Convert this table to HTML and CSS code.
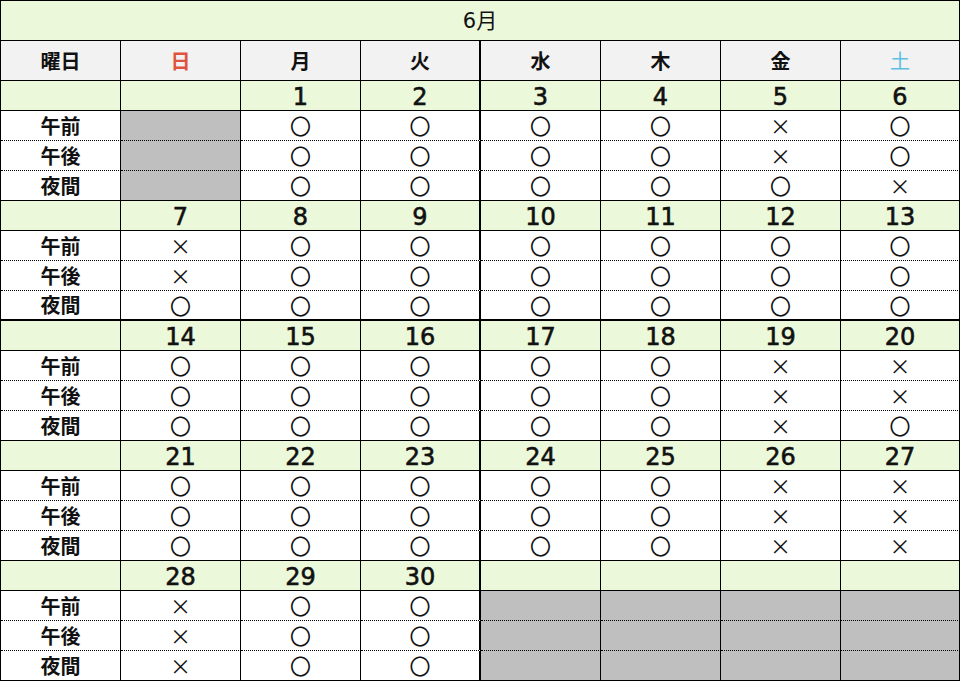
FILE: index.html
```html
<!DOCTYPE html>
<html lang="ja">
<head>
<meta charset="utf-8">
<title>6月</title>
<link rel="stylesheet" href="styles.css">
</head>
<body>
<table class="cal">
  <colgroup>
    <col class="c-label"><col class="c-day"><col class="c-day"><col class="c-day"><col class="c-day"><col class="c-day"><col class="c-day"><col class="c-last">
  </colgroup>
  <tr class="title"><td colspan="8"><span class="num">6</span>月</td></tr>
  <tr class="head">
    <td>曜日</td><td class="sun">日</td><td>月</td><td class="tue">火</td><td>水</td><td>木</td><td>金</td><td class="sat">土</td>
  </tr>

  <tr class="date"><td></td><td></td><td>1</td><td class="tue">2</td><td>3</td><td>4</td><td>5</td><td>6</td></tr>
  <tr class="slot dot"><td class="lbl">午前</td><td class="na"></td><td>〇</td><td class="tue">〇</td><td>〇</td><td>〇</td><td>×</td><td>〇</td></tr>
  <tr class="slot dot"><td class="lbl">午後</td><td class="na"></td><td>〇</td><td class="tue">〇</td><td>〇</td><td>〇</td><td>×</td><td>〇</td></tr>
  <tr class="slot"><td class="lbl">夜間</td><td class="na"></td><td>〇</td><td class="tue">〇</td><td>〇</td><td>〇</td><td>〇</td><td>×</td></tr>

  <tr class="date"><td></td><td>7</td><td>8</td><td class="tue">9</td><td>10</td><td>11</td><td>12</td><td>13</td></tr>
  <tr class="slot dot"><td class="lbl">午前</td><td>×</td><td>〇</td><td class="tue">〇</td><td>〇</td><td>〇</td><td>〇</td><td>〇</td></tr>
  <tr class="slot dot"><td class="lbl">午後</td><td>×</td><td>〇</td><td class="tue">〇</td><td>〇</td><td>〇</td><td>〇</td><td>〇</td></tr>
  <tr class="slot thick"><td class="lbl">夜間</td><td>〇</td><td>〇</td><td class="tue">〇</td><td>〇</td><td>〇</td><td>〇</td><td>〇</td></tr>

  <tr class="date"><td></td><td>14</td><td>15</td><td class="tue">16</td><td>17</td><td>18</td><td>19</td><td>20</td></tr>
  <tr class="slot dot"><td class="lbl">午前</td><td>〇</td><td>〇</td><td class="tue">〇</td><td>〇</td><td>〇</td><td>×</td><td>×</td></tr>
  <tr class="slot dot"><td class="lbl">午後</td><td>〇</td><td>〇</td><td class="tue">〇</td><td>〇</td><td>〇</td><td>×</td><td>×</td></tr>
  <tr class="slot"><td class="lbl">夜間</td><td>〇</td><td>〇</td><td class="tue">〇</td><td>〇</td><td>〇</td><td>×</td><td>〇</td></tr>

  <tr class="date"><td></td><td>21</td><td>22</td><td class="tue">23</td><td>24</td><td>25</td><td>26</td><td>27</td></tr>
  <tr class="slot dot"><td class="lbl">午前</td><td>〇</td><td>〇</td><td class="tue">〇</td><td>〇</td><td>〇</td><td>×</td><td>×</td></tr>
  <tr class="slot dot"><td class="lbl">午後</td><td>〇</td><td>〇</td><td class="tue">〇</td><td>〇</td><td>〇</td><td>×</td><td>×</td></tr>
  <tr class="slot"><td class="lbl">夜間</td><td>〇</td><td>〇</td><td class="tue">〇</td><td>〇</td><td>〇</td><td>×</td><td>×</td></tr>

  <tr class="date"><td></td><td>28</td><td>29</td><td class="tue">30</td><td></td><td></td><td></td><td></td></tr>
  <tr class="slot dot"><td class="lbl">午前</td><td>×</td><td>〇</td><td class="tue">〇</td><td class="na"></td><td class="na"></td><td class="na"></td><td class="na"></td></tr>
  <tr class="slot dot"><td class="lbl">午後</td><td>×</td><td>〇</td><td class="tue">〇</td><td class="na"></td><td class="na"></td><td class="na"></td><td class="na"></td></tr>
  <tr class="slot"><td class="lbl">夜間</td><td>×</td><td>〇</td><td class="tue">〇</td><td class="na"></td><td class="na"></td><td class="na"></td><td class="na"></td></tr>
</table>
</body>
</html>
```
FILE: styles.css
```css
html, body {
  margin: 0;
  padding: 0;
  background: #ffffff;
}

.cal {
  border-collapse: separate;
  border-spacing: 0;
  table-layout: fixed;
  width: 959px;
  border-top: 1px solid #000;
  border-left: 1px solid #000;
  font-family: "Noto Sans CJK JP", "Noto Sans", sans-serif;
  color: #111;
}

.c-label, .c-day { width: 120px; }
.c-last { width: 119px; }

.cal td {
  box-sizing: border-box;
  padding: 0;
  text-align: center;
  vertical-align: middle;
  border-right: 1px solid #000;
  border-bottom: 1px solid #000;
  line-height: 1;
  overflow: hidden;
  white-space: nowrap;
}

.cal td.tue {
  border-right-width: 2px;
}

.title td {
  height: 40px;
  background: #ebf8da;
  font-size: 21px;
  font-weight: 400;
}

.title .num {
  font-family: "DejaVu Sans", "Noto Sans CJK JP", sans-serif;
  font-size: 21px;
}

.head td {
  height: 40px;
  background: #f2f2f2;
  font-size: 20px;
  font-weight: 700;
}

.head .sun { color: #e0533c; }
.head .sat { color: #5ebfe2; font-weight: 400; }

.date td {
  height: 30px;
  background: #ebf8da;
  font-family: "DejaVu Sans", "Noto Sans CJK JP", sans-serif;
  font-size: 24px;
  font-weight: 400;
  -webkit-text-stroke: 0.6px #111;
  padding-top: 2px;
}

.slot td {
  height: 30px;
  font-size: 21px;
  font-weight: 400;
  background: #fff;
}

.slot td.lbl {
  font-weight: 700;
  font-size: 20px;
}

.slot.dot td {
  border-bottom: 1px dotted #000;
}

.slot.thick td {
  border-bottom-width: 2px;
}

.slot td.na {
  background: #bfbfbf;
}
```
